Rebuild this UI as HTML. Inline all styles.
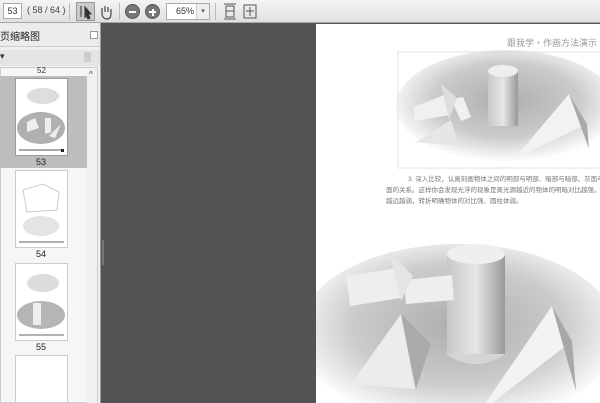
<!DOCTYPE html>
<html><head><meta charset="utf-8"><style>
*{margin:0;padding:0;box-sizing:border-box}
html,body{width:600px;height:403px;overflow:hidden}
body{background:#535353;font-family:"Liberation Sans","Noto Sans CJK SC",sans-serif;position:relative}
.tb{position:absolute;left:0;top:0;width:600px;height:23px;background:linear-gradient(#f4f4f4,#e0e0e0);border-bottom:1px solid #a8a8a8}
.abs{position:absolute}
.side{position:absolute;left:0;top:23px;width:101px;height:380px;background:#f0f0f0;border-right:1px solid #9a9a9a;overflow:hidden}
.page{position:absolute;left:316px;top:24px;width:284px;height:379px;background:#fff;overflow:hidden}
</style></head><body>
<div class="tb">
 <div class="abs" style="left:3px;top:3px;width:19px;height:16px;background:#fff;border:1px solid #aaa;font-size:9px;line-height:14px;text-align:center;color:#333">53</div>
 <div class="abs" style="left:27px;top:5px;font-size:9px;color:#444">( 58 / 64 )</div>
 <div class="abs" style="left:69px;top:3px;width:1px;height:17px;background:#bbb"></div>
 <div class="abs" style="left:76px;top:2px;width:19px;height:19px;background:#c9c9c9;border:1px solid #999"></div>
 <svg class="abs" style="left:76px;top:2px" width="19" height="19"><path d="M5 4v11M9 5l6 7h-3l2 4-2 1-2-4-1 3z" stroke="#333" fill="#333" stroke-width="1"/></svg>
 <svg class="abs" style="left:97px;top:3px" width="18" height="18"><path d="M5 10V5M8 9V3M11 9V4M14 10V6M5 10c0 4 2 6 5 6s4-2 4-6" stroke="#444" fill="none" stroke-width="1.2"/></svg>
 <div class="abs" style="left:119px;top:3px;width:1px;height:17px;background:#bbb"></div>
 <div class="abs" style="left:125px;top:4px;width:15px;height:15px;border-radius:50%;background:#777;border:1px solid #555"></div>
 <div class="abs" style="left:129px;top:11px;width:7px;height:2px;background:#fff"></div>
 <div class="abs" style="left:145px;top:4px;width:15px;height:15px;border-radius:50%;background:#777;border:1px solid #555"></div>
 <div class="abs" style="left:149px;top:11px;width:7px;height:2px;background:#fff"></div>
 <div class="abs" style="left:151.5px;top:8.5px;width:2px;height:7px;background:#fff"></div>
 <div class="abs" style="left:166px;top:3px;width:44px;height:17px;background:#fff;border:1px solid #aaa;font-size:9px;line-height:15px;padding-left:9px;color:#333">65%</div>
 <div class="abs" style="left:196px;top:4px;width:13px;height:15px;background:#eee;border-left:1px solid #ccc;font-size:7px;text-align:center;line-height:15px;color:#555">▾</div>
 <div class="abs" style="left:215px;top:3px;width:1px;height:17px;background:#bbb"></div>
 <svg class="abs" style="left:222px;top:3px" width="16" height="17"><path d="M2 1h12M2 16h12M4 3h8v11H4z" stroke="#555" fill="none"/><path d="M4 8h8" stroke="#555"/></svg>
 <svg class="abs" style="left:242px;top:3px" width="16" height="17"><rect x="2" y="2" width="12" height="13" stroke="#555" fill="none"/><path d="M8 4v9M4 8h8" stroke="#555"/></svg>
</div>
<div class="side">
 <div class="abs" style="left:0;top:0;width:101px;height:24px;background:#ececec;border-bottom:1px solid #ccc"></div>
 <div class="abs" style="left:0;top:5px;font-size:10px;color:#222">页缩略图</div>
 <div class="abs" style="left:90px;top:8px;width:8px;height:8px;border:1px solid #999;background:#fff"></div>
 <div class="abs" style="left:0;top:27px;width:101px;height:16px;background:#e4e4e4"></div>
 <div class="abs" style="left:0;top:28px;font-size:9px;color:#333">▾</div>
 <div class="abs" style="left:84px;top:29px;width:7px;height:10px;background:#ccc"></div>
 <div class="abs" style="left:0;top:44px;width:98px;height:336px;background:#f6f6f6;border:1px solid #ccc"></div>
 <div class="abs" style="left:87px;top:45px;width:10px;height:335px;background:#f0f0f0"></div>
 <div class="abs" style="left:89px;top:47px;font-size:8px;color:#333">^</div>
 <div class="abs" style="left:37px;top:43px;font-size:8px;color:#333">52</div>
 <div class="abs" style="left:0;top:53px;width:87px;height:92px;background:#bdbdbd"></div>
 <div class="abs" style="left:15px;top:55px;width:53px;height:78px;background:#fff;border:1px solid #999"></div>
 <svg class="abs" style="left:15px;top:55px" width="53" height="78">
  <ellipse cx="26" cy="50" rx="24" ry="16" fill="#b0b0b0"/>
  <path d="M12 44l8-4 4 10-12 4zM30 40h6v14l-6 2zM34 58l12-12-6 14z" fill="#eee"/>
  <ellipse cx="28" cy="18" rx="16" ry="8" fill="#ddd"/>
  <path d="M4 72h45" stroke="#555"/>
  <rect x="46" y="71" width="3" height="3" fill="#222"/>
 </svg>
 <div class="abs" style="left:36px;top:134px;font-size:9px;color:#222">53</div>
 <div class="abs" style="left:15px;top:147px;width:53px;height:78px;background:#fff;border:1px solid #ccc"></div>
 <svg class="abs" style="left:15px;top:147px" width="53" height="78"><path d="M8 20l20-6 16 8-2 18-30 2z" stroke="#ccc" fill="none"/><ellipse cx="26" cy="56" rx="18" ry="10" fill="#e4e4e4"/><path d="M4 72h45" stroke="#666"/></svg>
 <div class="abs" style="left:36px;top:226px;font-size:9px;color:#222">54</div>
 <div class="abs" style="left:15px;top:240px;width:53px;height:78px;background:#fff;border:1px solid #ccc"></div>
 <svg class="abs" style="left:15px;top:240px" width="53" height="78"><ellipse cx="28" cy="20" rx="16" ry="9" fill="#ddd"/><ellipse cx="26" cy="52" rx="24" ry="14" fill="#b5b5b5"/><path d="M18 40h8v22h-8z" fill="#eee"/><path d="M4 72h45" stroke="#666"/></svg>
 <div class="abs" style="left:36px;top:319px;font-size:9px;color:#222">55</div>
 <div class="abs" style="left:15px;top:332px;width:53px;height:48px;background:#fff;border:1px solid #ccc"></div>
</div>
<div class="abs" style="left:102px;top:240px;width:2px;height:25px;background:#777"></div>
<div class="page">
 <div class="abs" style="left:191px;top:12px;font-size:9px;color:#999;white-space:nowrap">跟我学・作画方法演示</div>
 <svg class="abs" style="left:0;top:0" width="284" height="379">
  <defs>
   <radialGradient id="g1" cx="50%" cy="45%" r="55%"><stop offset="0" stop-color="#8a8a8a"/><stop offset=".6" stop-color="#b5b5b5"/><stop offset="1" stop-color="#fff"/></radialGradient>
   <linearGradient id="cy" x1="0" x2="1"><stop offset="0" stop-color="#c8c8c8"/><stop offset=".5" stop-color="#e6e6e6"/><stop offset="1" stop-color="#999"/></linearGradient>
  </defs>
  <rect x="82" y="28" width="205" height="116" fill="#fff" stroke="#ccc" stroke-width=".6"/>
  <ellipse cx="190" cy="82" rx="110" ry="56" fill="url(#g1)" opacity=".7"/>
  <path d="M172 47h30v55h-30z" fill="url(#cy)"/><ellipse cx="187" cy="47" rx="15" ry="6" fill="#eee"/>
  <path d="M98 83l30-12 6 20-36 6zM135 75l10 22 10-4-8-20z" fill="#f0f0f0"/>
  <path d="M100 118l35-22 8 26z" fill="#e6e6e6"/><path d="M125 60l8 36 8-22z" fill="#ddd"/>
  <path d="M198 135l55-65 18 30z" fill="#f2f2f2"/><path d="M253 70l18 30 2 25z" fill="#aaa"/>
  <ellipse cx="142" cy="310" rx="160" ry="90" fill="url(#g1)" opacity=".7"/>
  <path d="M131 230h58v100h-58z" fill="url(#cy)"/><ellipse cx="160" cy="230" rx="29" ry="10" fill="#efefef"/>
  <path d="M130 330q30 20 59 0" fill="#d5d5d5"/>
  <path d="M30 252l52 -8 3 30-51 8zM88 256l48-5 2 25-48 4z" fill="#eee"/>
  <path d="M73 227l12 50 12-25z" fill="#e5e5e5"/>
  <path d="M35 360l50-70 14 75z" fill="#ececec"/><path d="M85 290l30 30-15 45z" fill="#aaa"/>
  <path d="M162 390l74-108 20 35z" fill="#f3f3f3"/><path d="M236 282l20 35 4 50z" fill="#a8a8a8"/>
 </svg>
 <div class="abs" style="left:82px;top:150px;width:202px;font-size:6.5px;line-height:11px;color:#777;white-space:nowrap;overflow:hidden">
  <div style="padding-left:10px">3. 深入比较，认真刻画物体之间的明部与明部、暗部与暗部、灰面与灰</div>
 </div>
 <div class="abs" style="left:70px;top:161px;width:214px;font-size:6.5px;line-height:11px;color:#777;white-space:nowrap;overflow:hidden">
  <div>面的关系。这样你会发现光浮的现象是离光源越近的物体的明暗对比越强，</div>
  <div>越远越弱，转折明确物体的对比强、圆柱体弱。</div>
 </div>
</div>
</body></html>
